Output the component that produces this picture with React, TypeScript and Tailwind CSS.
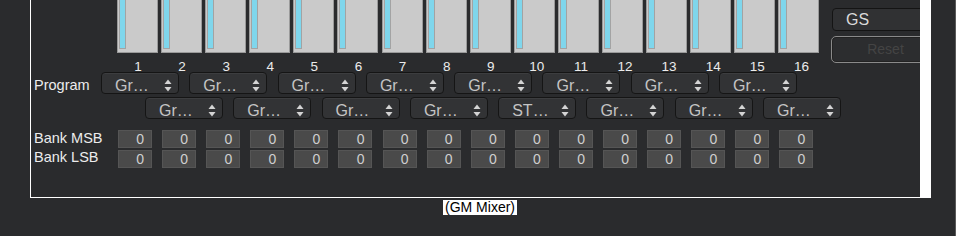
import React from "react";

const programs = ["Gr…", "Gr…", "Gr…", "Gr…", "Gr…", "Gr…", "Gr…", "Gr…", "Gr…", "ST…", "Gr…", "Gr…", "Gr…", "Gr…", "Gr…", "Gr…"];
const channels = Array.from({ length: 16 }, (_, i) => i + 1);

function Arrows() {
  return (
    <svg width="8" height="13" viewBox="0 0 8 13" className="shrink-0">
      <path d="M4 0.5 L7.5 5 L0.5 5 Z" fill="#d4d4d4" />
      <path d="M0.5 8 L7.5 8 L4 12.5 Z" fill="#d4d4d4" />
    </svg>
  );
}

function Dropdown({ label }: { label: string }) {
  return (
    <div className="flex h-[22px] w-[78px] shrink-0 items-start justify-between rounded-[4px] border border-[#151515] bg-[#323335] pl-[13px] pr-[6px] shadow-[inset_0_1px_0_#3c3d3f]">
      <span className="pt-[4px] text-[16px] leading-[18px] text-[#c4c4c4]">{label}</span>
      <div className="pt-[6px]">
        <Arrows />
      </div>
    </div>
  );
}

function Slider() {
  return (
    <div className="h-[53px] border border-t-0 border-[#9a9a9a] bg-[#cacaca]">
      <div className="ml-[1px] h-[49px] w-[7px] bg-[#a3a3a3] px-[1px] pb-[1px]">
        <div className="h-full w-full bg-[#7fd6ec]" />
      </div>
    </div>
  );
}

function BankBox() {
  return (
    <div className="h-[18px] w-[34px] shrink-0 border border-[#555555] bg-[#4a4a4a] pr-[7px] text-right text-[14px] leading-[16px] text-[#cfcfcf]">
      0
    </div>
  );
}

export default function App() {
  return (
    <div className="h-[236px] w-[956px] overflow-hidden border-r border-[#5a5a5a] bg-[#2a2b2d] font-['Liberation_Sans',Arial,sans-serif]">
      <div className="ml-[30px] flex h-[198px] w-[901px] flex-col overflow-hidden border-b border-l border-r-[11px] border-white">
        <div className="flex h-[72px] shrink-0">
          <div className="ml-[86px] w-[704px] shrink-0">
            <div className="grid grid-cols-[repeat(16,41px)] gap-x-[3.1px]">
              {channels.map((c) => (
                <Slider key={c} />
              ))}
            </div>
            <div className="grid h-[19px] grid-cols-[repeat(16,41px)] gap-x-[3.1px] pt-[7px] text-[13.5px] leading-[14px] text-[#ececec]">
              {channels.map((c) => (
                <div key={c} className={c >= 10 ? "pl-[5px] text-center" : "pl-[1px] text-center"}>
                  {c}
                </div>
              ))}
            </div>
          </div>
          <div className="ml-[11px] flex w-[108px] shrink-0 flex-col">
            <div className="mt-[8px] h-[23px] rounded-[4px] border border-[#141414] bg-[#303133] pl-[13px] text-[16px] leading-[21px] text-[#dadada]">
              GS
            </div>
            <div className="ml-[-1px] mt-[5px] h-[27px] rounded-[5px] border border-[#8a8a8a] bg-[#2c2d2f] text-center text-[14px] leading-[25px] text-[#444444] shadow-[inset_0_0_0_1px_#222]">
              Reset
            </div>
          </div>
        </div>

        <div className="flex h-[22px] shrink-0">
          <div className="w-[70px] shrink-0 pl-[3px] pt-[5px] text-[14.5px] leading-[17px] text-[#ececec]">Program</div>
          <div className="flex gap-x-[10.3px]">
            {programs.filter((_, i) => i % 2 === 0).map((p, i) => (
              <Dropdown key={i} label={p} />
            ))}
          </div>
        </div>
        <div className="mt-[3px] flex h-[22px] shrink-0 gap-x-[10.3px] pl-[114px]">
          {programs.filter((_, i) => i % 2 === 1).map((p, i) => (
            <Dropdown key={i} label={p} />
          ))}
        </div>

        <div className="mt-[11px] flex h-[18px] shrink-0">
          <div className="w-[87px] shrink-0 pl-[3px] text-[14.5px] leading-[17px] text-[#ececec]">Bank MSB</div>
          <div className="flex gap-x-[10.1px]">
            {channels.map((c) => (
              <BankBox key={c} />
            ))}
          </div>
        </div>
        <div className="mt-[2px] flex h-[18px] shrink-0">
          <div className="w-[87px] shrink-0 pl-[3px] text-[14.5px] leading-[14px] text-[#ececec]">Bank LSB</div>
          <div className="flex gap-x-[10.1px]">
            {channels.map((c) => (
              <BankBox key={c} />
            ))}
          </div>
        </div>
      </div>
      <div className="mt-[2px] flex w-[960px] justify-center">
        <span className="bg-white px-[2px] text-[14px] leading-[15px] text-black">(GM Mixer)</span>
      </div>
    </div>
  );
}
